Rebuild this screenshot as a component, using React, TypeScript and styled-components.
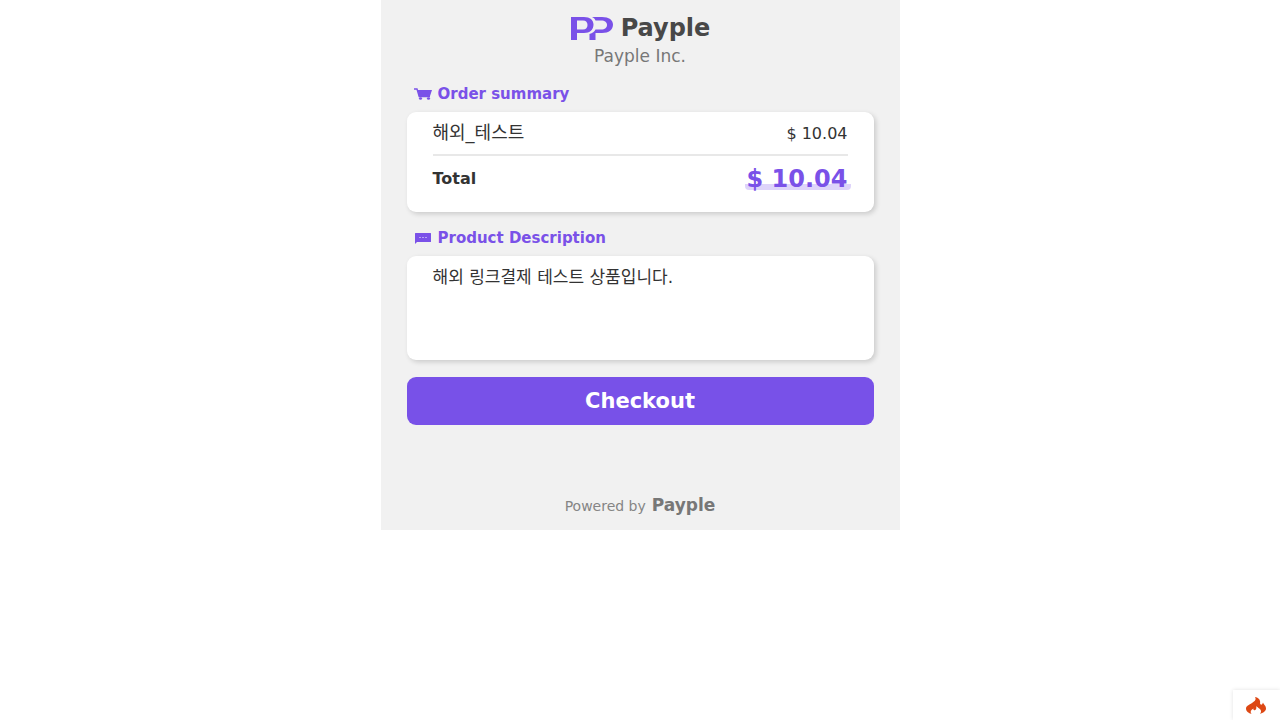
import React from "react";
import styled, { createGlobalStyle } from "styled-components";

const GlobalStyle = createGlobalStyle`
  * { box-sizing: border-box; }
  body {
    margin: 0;
    background: #fff;
    color: #333;
    font-family: "DejaVu Sans", "Noto Sans CJK KR", sans-serif;
  }
`;

const Page = styled.main`
  width: 100%;
  max-width: 519px;
  margin: 0 auto;
  padding: 14px 26px 12px;
  background: #f1f1f1;
`;

const Header = styled.header`
  display: flex;
  flex-direction: column;
  align-items: center;
`;

const Brand = styled.h1`
  display: flex;
  align-items: center;
  gap: 8px;
  height: 28px;
  margin: 0;
  font-size: 24px;
  line-height: 28px;
  color: #484848;
`;

const Company = styled.p`
  margin: 4px 0 0;
  font-size: 17px;
  line-height: 20px;
  color: #777;
`;

const SectionTitle = styled.h2`
  display: flex;
  align-items: center;
  gap: 6px;
  margin: 16px 0 8px;
  padding-left: 7px;
  font-size: 15px;
  line-height: 20px;
  color: #7a51e8;

  ${Header} + & {
    margin-top: 18px;
  }
`;

const Card = styled.section<{ $minHeight: number }>`
  min-height: ${(p) => p.$minHeight}px;
  padding: 0 26px;
  border-radius: 9px;
  background: #fff;
  box-shadow: 2px 2px 5px rgba(0, 0, 0, 0.16);
`;

const Row = styled.div`
  display: flex;
  align-items: center;
  justify-content: space-between;
  height: 42px;
  font-size: 16px;

  & + & {
    height: 47px;
    border-top: 2px solid #e8e8e8;
    font-weight: bold;
  }
`;

const ItemName = styled.span`
  font-size: 18px;
  line-height: 22px;
`;

const Total = styled.strong`
  margin-right: -3px;
  padding: 0 3px 0 2px;
  border-radius: 4px;
  background: linear-gradient(#ded4fa, #ded4fa) left bottom / 100% 6px no-repeat;
  font-size: 24px;
  line-height: 22px;
  color: #7a51e8;
`;

const Description = styled.p`
  margin: 0;
  padding-top: 10px;
  font-size: 17px;
  line-height: 22px;
`;

const Checkout = styled.button`
  width: 100%;
  height: 48px;
  margin-top: 17px;
  border: 0;
  border-radius: 9px;
  background: #7851e8;
  color: #fff;
  font-family: inherit;
  font-size: 21px;
  font-weight: bold;
  cursor: pointer;
`;

const Footer = styled.footer`
  display: flex;
  align-items: baseline;
  justify-content: center;
  gap: 6px;
  margin-top: 68px;
  font-size: 14px;
  line-height: 24px;
  color: #858585;

  strong {
    font-size: 17px;
    color: #777;
  }
`;

const DebugButton = styled.button`
  position: fixed;
  right: 0;
  bottom: 0;
  display: flex;
  align-items: center;
  justify-content: center;
  width: 47px;
  height: 30px;
  padding: 1px 1px 0 0;
  border: 0;
  background: #fff;
  box-shadow: 0 0 4px rgba(0, 0, 0, 0.12);
  color: #dd4814;
  cursor: pointer;
`;

const Logo = () => (
  <svg width="43" height="24" viewBox="0 0 43 24" aria-hidden="true">
    <g fill="#7a51e8">
      <path fillRule="evenodd" d="M1 1H14C20 1 23.500 4 23.500 8.500C23.500 13.500 20 17 14 17H7V24H1ZM7 4.500V13.500H13C16 13.500 17.500 11.500 17.500 9C17.500 6.500 16 4.500 13 4.500Z" />
      <path d="M22 1H32C39 1 43 4 43 8.500C43 13.500 39 17 32 17H25.500V24H19.500V18C22.500 17 24.500 15.500 25.500 13.500H31C35 13.500 37 11.500 37 9C37 6.500 35 4.500 31 4.500H25.500C25 3 24 2 22 1Z" />
    </g>
  </svg>
);

const Cart = () => (
  <svg width="18" height="12" viewBox="0 0 18 12" aria-hidden="true">
    <path d="M0 1H3L5.200 8.600H16" fill="none" stroke="#7a51e8" strokeWidth="1.400" />
    <path d="M3.500 2H18L16 8H5Z" fill="#7a51e8" />
    <ellipse cx="6.500" cy="10.500" rx="1.600" ry="1.300" fill="#7a51e8" />
    <ellipse cx="14.500" cy="10.500" rx="1.600" ry="1.300" fill="#7a51e8" />
  </svg>
);

const Bubble = () => (
  <svg width="18" height="12" viewBox="0 0 18 12" aria-hidden="true">
    <path d="M1.500 1H16.500Q17 1 17 1.500V9.500Q17 10 16.500 10H3L1 12V1.500Q1 1 1.500 1Z" fill="#7a51e8" />
    <path d="M5 5.500H7M8 5.500H10M11 5.500H13" stroke="#b9a3f3" />
  </svg>
);

const Flame = () => (
  <svg width="20" height="17" viewBox="0 0 20 17" aria-hidden="true">
    <path
      d="M9 0C10.500 2.500 9 4 6 6C3 8 0 9 0 11.500C0 14.500 2.500 16 5.500 17C4 15 4.500 13 7.500 11.500C7 13 8 13.500 9.200 13C11 12 10 10.500 10.500 9C11.500 11 15.500 12 15 14.500C15 15.500 14.500 16.300 13.500 17C17.500 16 20 14 20 11.500C20 8.500 17.500 7.500 17 5.500C16.500 7 16 8 14.800 7.500C13.500 7 14.500 5.500 14 4C13.500 2 12 .5 9 0Z"
      fill="currentColor"
    />
  </svg>
);

export default function App() {
  return (
    <>
      <GlobalStyle />
      <Page>
        <Header>
          <Brand><Logo />Payple</Brand>
          <Company>Payple Inc.</Company>
        </Header>
        <SectionTitle><Cart />Order summary</SectionTitle>
        <Card $minHeight={100}>
          <Row><ItemName>해외_테스트</ItemName><span>$ 10.04</span></Row>
          <Row><span>Total</span><Total>$ 10.04</Total></Row>
        </Card>
        <SectionTitle><Bubble />Product Description</SectionTitle>
        <Card $minHeight={104}>
          <Description>해외 링크결제 테스트 상품입니다.</Description>
        </Card>
        <Checkout type="button">Checkout</Checkout>
        <Footer>Powered by <strong>Payple</strong></Footer>
      </Page>
      <DebugButton type="button" aria-label="Debug toolbar">
        <Flame />
      </DebugButton>
    </>
  );
}
